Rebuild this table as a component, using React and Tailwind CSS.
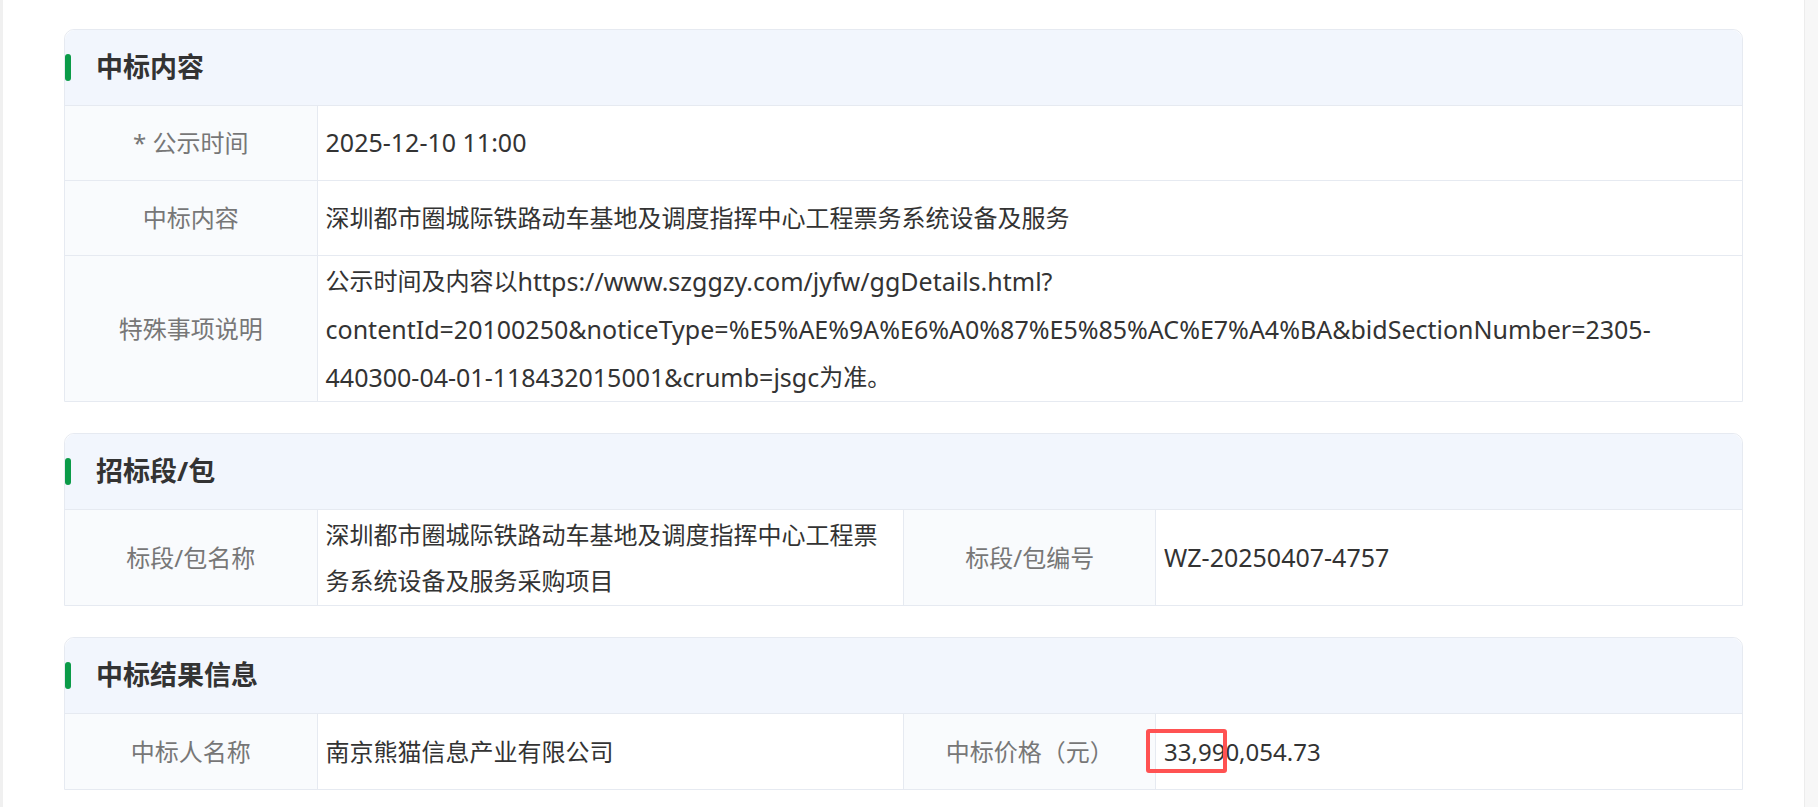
const font = "font-['Noto_Sans','Noto_Sans_CJK_SC',sans-serif]";

// latin runs render a touch larger than the CJK text, like the original font does
const En = ({ children, size = 'text-[25px]' }) => <span className={`${size} align-top`}>{children}</span>;

function Section({ title, children }) {
    return (
        <div className="rounded-t-[10px] border border-[#e6eaf1] bg-white">
            <div className="flex h-[75px] items-center rounded-t-[10px] bg-[#f2f6fd]">
                <span className="h-[27px] w-[6px] rounded-full bg-[#0b9b48]" />
                <h2 className="ml-[25px] text-[27px] font-bold text-[#333]">{title}</h2>
            </div>
            {children}
        </div>
    );
}

function Label({ children, border = false }) {
    return (
        <div className={`flex items-center justify-center bg-[#f9fbfd] text-[24px] text-[#777] ${border ? 'border-l border-[#e6eaf1]' : ''}`}>
            {children}
        </div>
    );
}

function Value({ children, className = '' }) {
    return (
        <div className={`flex items-center border-l border-[#e6eaf1] px-2 text-[24px] text-[#333] ${className}`}>
            {children}
        </div>
    );
}

export default function App() {
    return (
        <div className={`flex min-h-screen w-full bg-white ${font}`}>
            <div className="w-[3px] shrink-0 bg-[#f0f0f0]" />

            <div className="flex flex-1 flex-col gap-[31px] px-[61px] pt-[29px]">
                {/* 中标内容 */}
                <Section title="中标内容">
                    <div className="grid h-[75px] grid-cols-[15%_85%] border-t border-[#e6eaf1]">
                        <Label>* 公示时间</Label>
                        <Value><En>2025-12-10 11:00</En></Value>
                    </div>
                    <div className="grid h-[75px] grid-cols-[15%_85%] border-t border-[#e6eaf1]">
                        <Label>中标内容</Label>
                        <Value>深圳都市圈城际铁路动车基地及调度指挥中心工程票务系统设备及服务</Value>
                    </div>
                    <div className="grid h-[146px] grid-cols-[15%_85%] border-t border-[#e6eaf1]">
                        <Label>特殊事项说明</Label>
                        <Value className="leading-[48px] whitespace-nowrap">
                            <div>
                                公示时间及内容以<En>https://www.szggzy.com/jyfw/ggDetails.html?</En>
                                <br />
                                <En>contentId=20100250&amp;noticeType=%E5%AE%9A%E6%A0%87%E5%85%AC%E7%A4%BA&amp;bidSectionNumber=2305-</En>
                                <br />
                                <En>440300-04-01-118432015001&amp;crumb=jsgc</En>为准。
                            </div>
                        </Value>
                    </div>
                </Section>

                {/* 招标段/包 */}
                <Section title="招标段/包">
                    <div className="grid h-[96px] grid-cols-[15%_35%_15%_35%] border-t border-[#e6eaf1]">
                        <Label>标段/包名称</Label>
                        <Value className="leading-[46px] whitespace-nowrap">
                            <div>
                                深圳都市圈城际铁路动车基地及调度指挥中心工程票
                                <br />
                                务系统设备及服务采购项目
                            </div>
                        </Value>
                        <Label border>标段/包编号</Label>
                        <Value><En>WZ-20250407-4757</En></Value>
                    </div>
                </Section>

                {/* 中标结果信息 */}
                <Section title="中标结果信息">
                    <div className="grid h-[76px] grid-cols-[15%_35%_15%_35%] border-t border-[#e6eaf1]">
                        <Label>中标人名称</Label>
                        <Value>南京熊猫信息产业有限公司</Value>
                        <Label border>中标价格（元）</Label>
                        <Value className="relative">
                            <En size="text-[24px]">33,990,054.73</En>
                            <span className="absolute left-[-10px] top-[15px] h-[44px] w-[81px] rounded-[3px] border-[4px] border-[#ff5252]" />
                        </Value>
                    </div>
                </Section>
            </div>

            <div className="w-[14px] shrink-0 border-l border-[#ececec] bg-[#f7f7f7]" />
        </div>
    );
}
